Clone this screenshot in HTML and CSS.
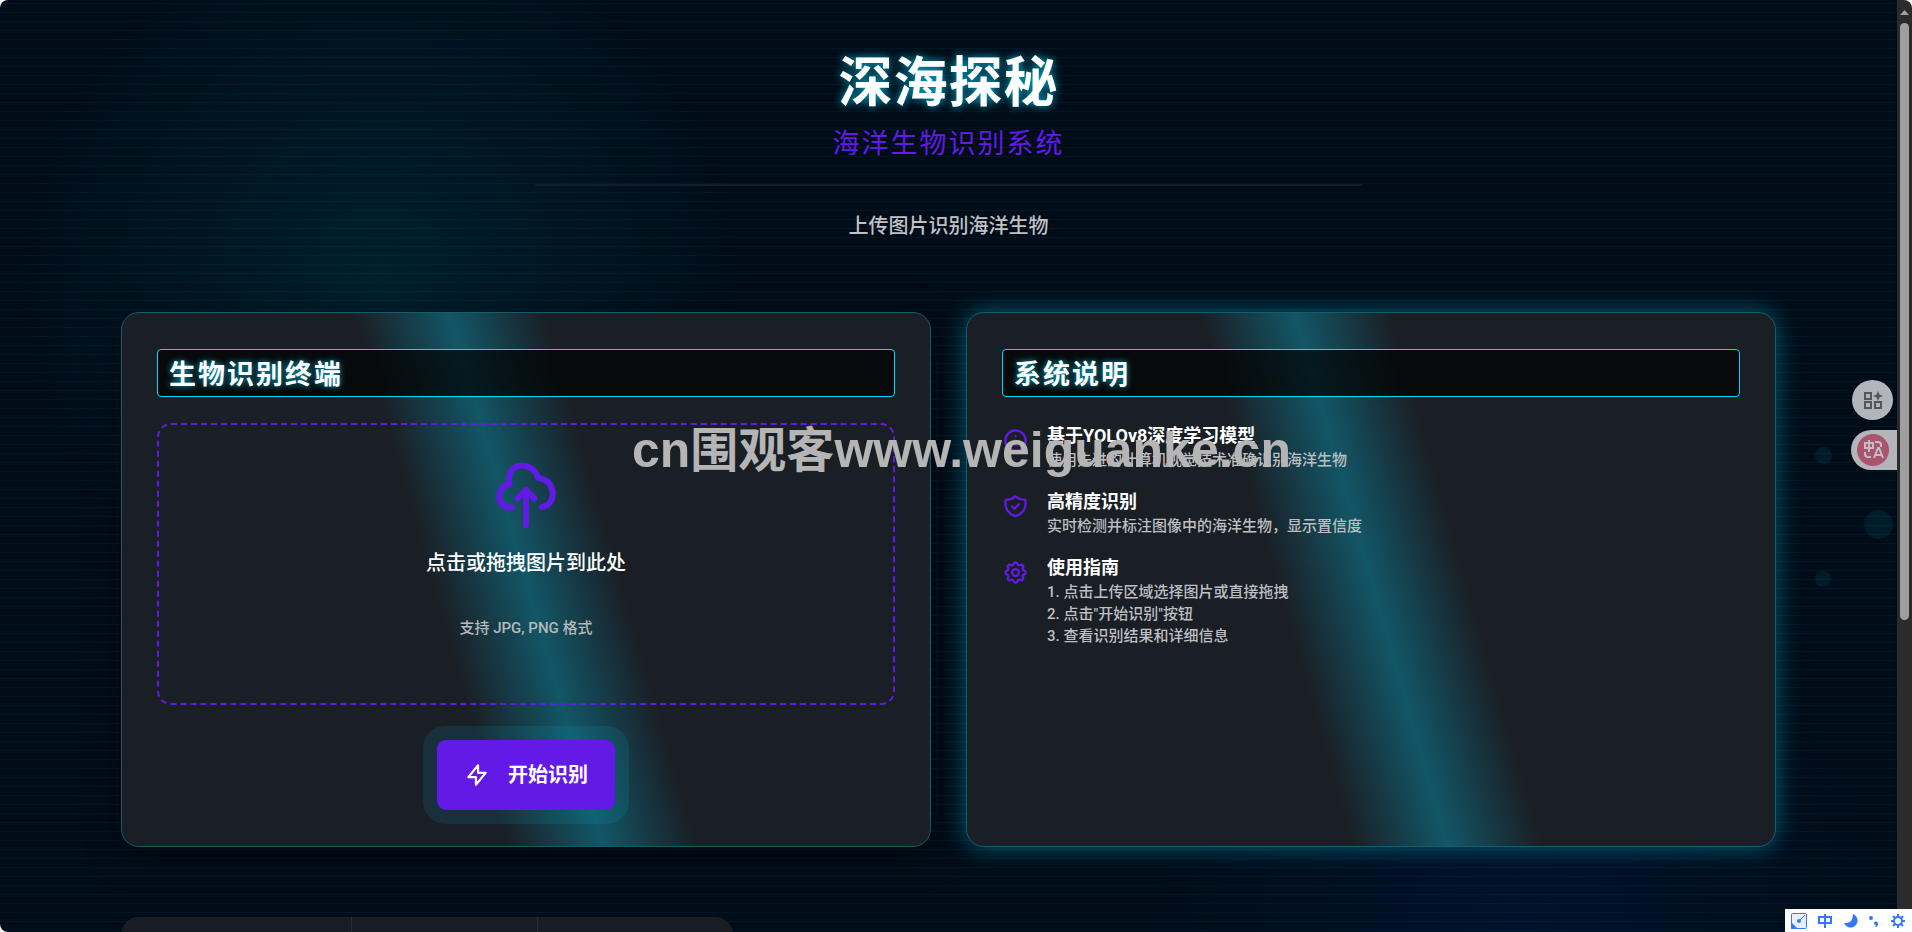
FILE: index.html
```html
<!DOCTYPE html>
<html lang="zh-CN">
<head>
<meta charset="utf-8">
<title>深海探秘</title>
<link rel="stylesheet" href="styles.css">
</head>
<body>
<div class="window">
  <div class="page">
    <i class="bubble bubble-a"></i>
    <i class="bubble bubble-b"></i>
    <i class="bubble bubble-c"></i>
    <main class="container">
      <header class="hero">
        <h1 class="hero-title">深海探秘</h1>
        <h2 class="hero-subtitle">海洋生物识别系统</h2>
        <hr class="hero-rule">
        <p class="hero-text">上传图片识别海洋生物</p>
      </header>
      <div class="cards">
        <section class="card">
          <h3 class="card-title">生物识别终端</h3>
          <button class="dropzone" type="button">
            <svg class="cloud" viewBox="0 0 60 66" fill="none" stroke="currentColor" stroke-width="6" stroke-linecap="round" stroke-linejoin="round"><path d="M16 45.500C0 47 -1 25 13.500 22C9 -1 37 -2 42 16C61 18 61 43 46 45M30 63V27.500M21.500 36.500L30 28L38.500 36.500"/></svg>
            <span class="drop-main">点击或拖拽图片到此处</span>
            <span class="drop-hint">支持 JPG, PNG 格式</span>
          </button>
          <button class="start" type="button">
            <svg class="bolt" viewBox="0 0 24 24" fill="none" stroke="currentColor" stroke-width="2" stroke-linecap="round" stroke-linejoin="round"><path d="M13 10V3L4 14h7v7l9-11h-7z"/></svg>
            <span class="start-label">开始识别</span>
          </button>
        </section>
        <section class="card card-active">
          <h3 class="card-title">系统说明</h3>
          <ul class="features">
            <li class="feature">
              <svg class="feature-icon" viewBox="0 0 24 24" fill="none" stroke="currentColor" stroke-width="2" stroke-linecap="round" stroke-linejoin="round"><path d="M13 16h-1v-4h-1m1-4h.01M21 12a9 9 0 11-18 0 9 9 0 0118 0z"/></svg>
              <div><h4 class="feature-title">基于YOLOv8深度学习模型</h4><p class="feature-text">使用先进的计算机视觉技术准确识别海洋生物</p></div>
            </li>
            <li class="feature">
              <svg class="feature-icon" viewBox="0 0 24 24" fill="none" stroke="currentColor" stroke-width="2" stroke-linecap="round" stroke-linejoin="round"><path d="M9 12l2 2 4-4m5.618-4.016A11.955 11.955 0 0112 2.944a11.955 11.955 0 01-8.618 3.040A12.020 12.020 0 003 9c0 5.591 3.824 10.290 9 11.622 5.176-1.332 9-6.030 9-11.622 0-1.042-.133-2.052-.382-3.016z"/></svg>
              <div><h4 class="feature-title">高精度识别</h4><p class="feature-text">实时检测并标注图像中的海洋生物，显示置信度</p></div>
            </li>
            <li class="feature">
              <svg class="feature-icon" viewBox="0 0 24 24" fill="none" stroke="currentColor" stroke-width="2" stroke-linecap="round" stroke-linejoin="round"><path d="M10.325 4.317c.426-1.756 2.924-1.756 3.350 0a1.724 1.724 0 002.573 1.066c1.543-.94 3.310.826 2.370 2.370a1.724 1.724 0 001.065 2.572c1.756.426 1.756 2.924 0 3.350a1.724 1.724 0 00-1.066 2.573c.94 1.543-.826 3.310-2.370 2.370a1.724 1.724 0 00-2.572 1.065c-.426 1.756-2.924 1.756-3.350 0a1.724 1.724 0 00-2.573-1.066c-1.543.94-3.310-.826-2.370-2.370a1.724 1.724 0 00-1.065-2.572c-1.756-.426-1.756-2.924 0-3.350a1.724 1.724 0 001.066-2.573c-.94-1.543.826-3.310 2.370-2.370.996.608 2.296.070 2.572-1.065z"/><path d="M15 12a3 3 0 11-6 0 3 3 0 016 0z"/></svg>
              <div><h4 class="feature-title">使用指南</h4><p class="feature-text">1. 点击上传区域选择图片或直接拖拽<br>2. 点击"开始识别"按钮<br>3. 查看识别结果和详细信息</p></div>
            </li>
          </ul>
        </section>
      </div>
      <div class="stats"><div class="stat"></div><div class="stat"></div><div class="stat"></div></div>
    </main>
  </div>
  <div class="scrollbar"><svg class="scroll-arrow" viewBox="0 0 15 20"><path d="M7.500 10L12 15H3z" fill="#9f9f9f"/></svg><div class="scroll-thumb"></div></div>
</div>
<div class="watermark">cn<span class="watermark-cjk">围观客</span>www.weiguanke.cn</div>
<div class="side-tools">
  <button class="side-apps" type="button" aria-label="应用"><svg width="20" height="20" viewBox="0 0 20 20" fill="none" stroke="#55575c" stroke-width="2"><path d="M2 3h6v6H2zM2 12h6v6H2zM12 12h6v6h-6z"/><path d="M15 1l1.500 3.500L20 6l-3.500 1.500L15 11l-1.500-3.500L10 6l3.500-1.500z" fill="#55575c" stroke="none"/></svg></button>
  <button class="side-translate" type="button" aria-label="翻译"><svg width="32" height="32" viewBox="0 0 32 32" fill="none" stroke="#c4bcc4" stroke-width="2"><circle cx="16" cy="16" r="16" fill="#aa5470" stroke="none"/><path d="M8 9h8v5H8zM12 6v12M18 8h3q3 0 3 3v2M8 18v2q0 3 3 3h3M17 24l4-10h1l4 10M18 21h6"/></svg></button>
</div>
<div class="ime">
  <svg width="16" height="16" viewBox="0 0 16 16"><rect x=".5" y=".5" width="15" height="15" rx="1" fill="#e8f0ff" stroke="#3478f6"/><path d="M0 9l7 7H0z" fill="#3478f6"/><circle cx="8" cy="8" r="2" fill="#3478f6"/><path d="M8 8l6-6" stroke="#3478f6"/></svg>
  <svg width="16" height="16" viewBox="0 0 16 16" fill="none" stroke="#3478f6" stroke-width="2"><path d="M2 4h12v6H2zM8 1v14"/></svg>
  <svg width="14" height="14" viewBox="0 0 14 14"><path d="M9 0a7 7 0 11-9 9Q9 10 9 0z" fill="#3478f6"/></svg>
  <svg width="12" height="14" viewBox="0 0 12 14" fill="#3478f6"><circle cx="3" cy="4" r="2"/><path d="M6 9a2 2 0 114 1q0 3-3 3l1-2q-2 0-2-2z"/></svg>
  <svg width="16" height="16" viewBox="0 0 16 16" fill="none" stroke="#3478f6" stroke-width="2"><circle cx="8" cy="8" r="4"/><path d="M8 1v3M8 12v3M1 8h3M12 8h3M3 3l2 2M11 11l2 2M3 13l2-2M11 5l2-2"/></svg>
</div>
</body>
</html>
```
FILE: styles.css
```css
* { box-sizing: border-box; margin: 0; padding: 0; }
body {
  height: 100vh;
  overflow: hidden;
  background: #fff;
  color: #fff;
  font-family: Roboto, "Noto Sans CJK SC", sans-serif;
  font-size: 18px;
}
button { font: inherit; color: inherit; border: 0; background: none; cursor: pointer; }
.window { display: flex; height: 100vh; overflow: hidden; border-radius: 8px 8px 0 8px; }
.page {
  position: relative;
  flex: 1;
  overflow: hidden;
  background:
    repeating-linear-gradient(180deg, transparent 0 3px, rgba(0, 217, 255, 0.05) 3px 4px, transparent 4px 9px),
    radial-gradient(circle 370px at 20% 30%, rgba(0, 217, 255, 0.09), transparent),
    radial-gradient(circle 370px at 80% 100%, rgba(0, 80, 255, 0.08), transparent),
    #000c18;
}
.container { padding: 51px 121px 0; }
.hero { display: flex; flex-direction: column; align-items: center; }
.hero-title {
  font-size: 54px;
  line-height: 66px;
  font-weight: 700;
  letter-spacing: 1px;
  text-shadow: 0 0 9px rgba(0, 217, 255, 0.8);
}
.hero-subtitle { margin-top: 8px; font-size: 27px; line-height: 38px; font-weight: 400; letter-spacing: 2px; color: #641ae6; }
.hero-rule { width: 50%; height: 2px; margin: 21px 0 26px; border: 0; background: #131d29; }
.hero-text { font-size: 20px; line-height: 28px; font-weight: 500; color: #c0c1c5; }
.cards { display: grid; grid-template-columns: 1fr 1fr; gap: 35px; margin-top: 72px; }
.card {
  display: flex;
  flex-direction: column;
  padding: 36px 35px;
  min-height: 535px;
  border: 1px solid #125e6c;
  border-radius: 18px;
  background: linear-gradient(74deg, transparent 40%, rgba(0, 217, 255, 0.3) 50%, transparent 60%), #1a1e25;
  box-shadow: 0 9px 36px rgba(0, 0, 0, 0.4);
}
.card-active { box-shadow: 0 0 24px rgba(0, 217, 255, 0.4); }
.card-title {
  padding: 6px 11px 2px;
  border: 1px solid #00d9ff;
  border-radius: 4px;
  background: rgba(0, 0, 0, 0.7);
  font-size: 27px;
  line-height: 38px;
  letter-spacing: 2px;
  text-shadow: 0 0 6px rgba(0, 217, 255, 0.8);
}
.dropzone {
  display: flex;
  flex-direction: column;
  align-items: center;
  height: 282px;
  margin-top: 26px;
  padding-top: 37px;
  border: 2px dashed #641ae6;
  border-radius: 14px;
}
.cloud { width: 60px; height: 66px; color: #641ae6; }
.drop-main { margin-top: 21px; font-size: 20px; line-height: 28px; font-weight: 500; }
.drop-hint { margin-top: 40px; font-size: 15px; line-height: 22px; font-weight: 500; color: #b4b9bc; }
.start {
  display: flex;
  align-items: center;
  justify-content: center;
  align-self: center;
  gap: 18px;
  width: 178px;
  height: 70px;
  margin-top: 35px;
  border-radius: 9px;
  background: #641ae6;
  box-shadow: 0 0 0 14px rgba(0, 217, 255, 0.1);
  font-size: 20px;
  font-weight: 700;
}
.start-label { padding-bottom: 4px; }
.bolt { width: 26px; height: 26px; }
.features { display: flex; flex-direction: column; gap: 18px; margin-top: 26px; list-style: none; }
.feature { display: flex; gap: 18px; }
.feature-icon { width: 27px; height: 27px; margin-top: 4px; color: #641ae6; }
.feature-title { font-size: 18px; line-height: 26px; font-weight: 700; }
.feature-text { font-size: 15px; line-height: 22px; font-weight: 500; color: #bdbfc3; }
.stats { display: grid; grid-template-columns: 230fr 186fr 197fr; width: 37%; height: 130px; margin-top: 70px; border-radius: 18px; background: #1a1d24; }
.stat + .stat { border-left: 1px solid #2a2d34; }
.bubble { position: absolute; border-radius: 50%; background: rgba(0, 217, 255, 0.08); }
.bubble-a { top: 447px; right: 65px; width: 17px; height: 17px; }
.bubble-b { top: 510px; right: 4px; width: 29px; height: 29px; }
.bubble-c { top: 571px; right: 66px; width: 16px; height: 16px; }
.scrollbar { width: 15px; background: #2b2b2b; }
.scroll-arrow { display: block; width: 15px; height: 20px; }
.scroll-thumb { width: 9px; height: 597px; margin: 3px auto 0 3px; border-radius: 5px; background: #9f9f9f; }
.watermark {
  position: absolute;
  top: 420px;
  left: 632px;
  color: #b5b5b5;
  font: 700 50px/60px "Liberation Sans", "Noto Sans CJK SC", sans-serif;
  white-space: nowrap;
  pointer-events: none;
}
.watermark-cjk { font-size: 48px; }
.side-tools { position: absolute; top: 380px; right: 15px; display: flex; flex-direction: column; align-items: flex-end; gap: 10px; }
.side-apps, .side-translate { display: flex; align-items: center; height: 40px; background: #b3b5bb; }
.side-apps { justify-content: center; width: 41px; margin-right: 4px; border-radius: 50%; }
.side-translate { width: 46px; padding-left: 6px; border-radius: 20px 0 0 20px; }
.ime { position: absolute; right: 0; bottom: 0; display: flex; align-items: center; justify-content: space-between; width: 127px; height: 23px; padding: 0 6px; background: #fff; }
```
